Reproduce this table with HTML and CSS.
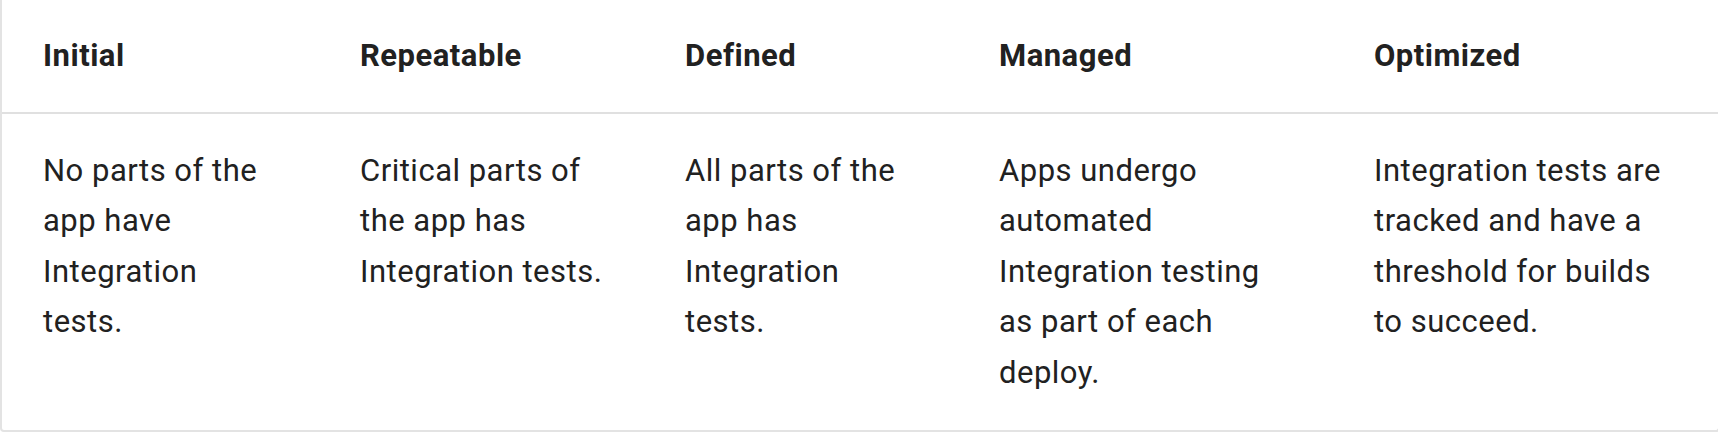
FILE: index.html
```html
<!DOCTYPE html>
<html>
<head>
<meta charset="utf-8">
<link rel="stylesheet" href="styles.css">
</head>
<body>
<div class="card">
  <div class="grid">
    <div class="cell head">Initial</div>
    <div class="cell head">Repeatable</div>
    <div class="cell head">Defined</div>
    <div class="cell head">Managed</div>
    <div class="cell head">Optimized</div>
    <div class="cell body">No parts of the app have Integration tests.</div>
    <div class="cell body">Critical parts of the app has Integration tests.</div>
    <div class="cell body">All parts of the app has Integration tests.</div>
    <div class="cell body">Apps undergo automated Integration testing as part of each deploy.</div>
    <div class="cell body">Integration tests are tracked and have a threshold for builds to succeed.</div>
  </div>
</div>
</body>
</html>
```
FILE: styles.css
```css
html, body {
  margin: 0;
  padding: 0;
  background: #ffffff;
  overflow: hidden;
}
body {
  font-family: Roboto, "Liberation Sans", sans-serif;
  color: #212121;
}
.card {
  width: calc(100% + 2px);
  height: 432px;
  box-sizing: border-box;
  border: 2px solid #e3e3e3;
  border-top: none;
  border-radius: 0 0 4px 4px;
  background: #fff;
}
.grid {
  display: grid;
  grid-template-columns: 317px 325px 314px 375px 1fr;
}
.cell {
  font-size: 31px;
  line-height: 50.6px;
  letter-spacing: 0.5px;
  padding-left: 41px;
  padding-right: 40px;
}
.head {
  font-weight: 700;
  padding-top: 31.2px;
  padding-bottom: 30.2px;
  border-bottom: 2px solid #e0e0e0;
}
.body {
  font-weight: 400;
  padding-top: 31.7px;
  padding-bottom: 30px;
}
```
